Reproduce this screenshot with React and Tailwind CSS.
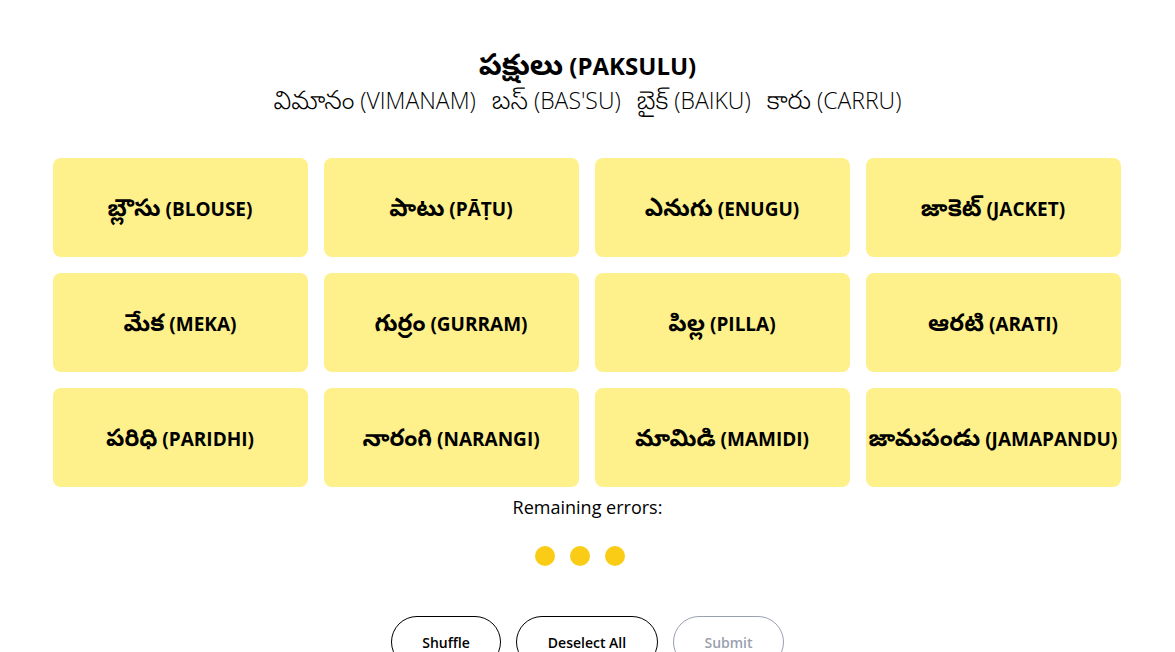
import React from 'react'

const words = [
  ['బ్లౌసు', '(BLOUSE)'],
  ['పాటు', '(PĀṬU)'],
  ['ఎనుగు', '(ENUGU)'],
  ['జాకెట్', '(JACKET)'],
  ['మేక', '(MEKA)'],
  ['గుర్రం', '(GURRAM)'],
  ['పిల్ల', '(PILLA)'],
  ['ఆరటి', '(ARATI)'],
  ['పరిధి', '(PARIDHI)'],
  ['నారంగి', '(NARANGI)'],
  ['మామిడి', '(MAMIDI)'],
  ['జామపండు', '(JAMAPANDU)'],
]

const solved = [
  ['విమానం', '(VIMANAM)'],
  ['బస్', "(BAS'SU)"],
  ['బైక్', '(BAIKU)'],
  ['కారు', '(CARRU)'],
]

export default function App() {
  return (
    <div className="min-h-screen bg-white text-black font-['Open_Sans','Noto_Sans','Noto_Sans_Telugu',sans-serif]">
      <div className="pt-[49px] flex flex-col items-center">
        {/* Solved group */}
        <h2 className="h-8 leading-8 text-[24px] font-bold whitespace-nowrap">
          <span className="text-[1.24em] leading-none">పక్షులు</span> (PAKSULU)
        </h2>
        <div className="h-[38px] leading-[38px] flex gap-4 text-[23px] font-light">
          {solved.map(([te, en]) => (
            <span key={en} className="whitespace-nowrap">
              <span className="text-[1.12em] leading-none">{te}</span> {en}
            </span>
          ))}
        </div>

        {/* Word grid */}
        <div className="mt-[39px] w-[1068px] -translate-x-px grid grid-cols-4 gap-4">
          {words.map(([te, en]) => (
            <button
              key={en}
              className="h-[99px] pt-[3px] rounded-lg bg-[#fef08a] text-center text-[19px] font-bold whitespace-nowrap"
            >
              <span className="text-[1.25em] leading-none">{te}</span> {en}
            </button>
          ))}
        </div>

        <p className="mt-[6px] text-[18px] leading-7">Remaining errors:</p>

        <div className="mt-[25px] flex">
          <span className="w-5 h-5 mr-[15px] rounded-full bg-[#facc15]" />
          <span className="w-5 h-5 mr-[15px] rounded-full bg-[#facc15]" />
          <span className="w-5 h-5 mr-[15px] rounded-full bg-[#facc15]" />
        </div>

        <div className="mt-[50px] flex gap-[15px]">
          <button className="w-[110px] h-[52px] rounded-full border border-black text-[14px] font-semibold">
            Shuffle
          </button>
          <button className="w-[142px] h-[52px] rounded-full border border-black text-[14px] font-semibold">
            Deselect All
          </button>
          <button className="w-[111px] h-[52px] rounded-full border border-gray-400 text-gray-400 text-[14px] font-semibold">
            Submit
          </button>
        </div>
      </div>
    </div>
  )
}
